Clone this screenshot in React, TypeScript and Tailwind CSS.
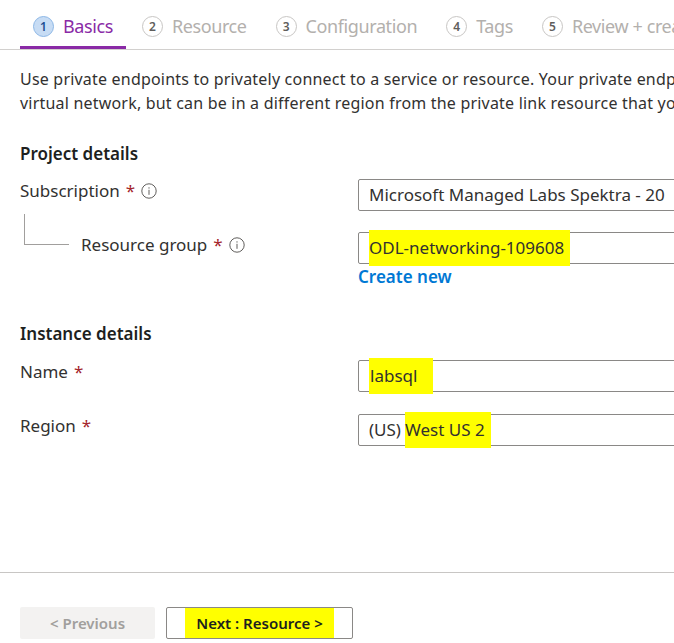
import React from 'react';

const font = { fontFamily: '"Noto Sans", "Open Sans", sans-serif' };

const InfoIcon: React.FC = () => (
  <svg width="16" height="16" viewBox="0 0 16 16" className="inline-block shrink-0 text-[#605e5c]">
    <circle cx="8" cy="8" r="7.2" fill="none" stroke="currentColor" strokeWidth="1" />
    <rect x="7.5" y="6.8" width="1" height="5" fill="currentColor" />
    <circle cx="8" cy="4.9" r="0.7" fill="currentColor" />
  </svg>
);

const Req: React.FC = () => <span className="text-[#a4262c] ml-[6px]">*</span>;

type TabProps = { n: number; label: string; active?: boolean };

const Tab: React.FC<TabProps> = ({ n, label, active }) => (
  <div
    className={`flex items-center gap-[9px] px-[13px] h-full border-b-[3px] shrink-0 ${
      active ? 'border-[#8a2aa6]' : 'border-transparent'
    }`}
  >
    <span
      className={`flex items-center justify-center w-[21px] h-[21px] rounded-full text-[12px] font-semibold border ${
        active
          ? 'bg-[#c7dcf4] border-[#8cb7e6] text-[#1d4f91]'
          : 'bg-white border-[#c8c6c4] text-[#605e5c]'
      }`}
    >
      {n}
    </span>
    <span className={`text-[18px] tracking-[-0.4px] ${active ? 'text-[#8a2aa6]' : 'text-[#b3b0ad]'}`}>
      {label}
    </span>
  </div>
);

const Box: React.FC<{ children: React.ReactNode }> = ({ children }) => (
  <div className="w-[340px] h-[32px] shrink-0 border border-[#8a8886] rounded-[2px] flex items-center pl-[10px] text-[17px] text-[#323130] whitespace-nowrap">
    {children}
  </div>
);

const Mark: React.FC<{ children: React.ReactNode; className?: string }> = ({ children, className }) => (
  <span className={`bg-[#ffff00] py-[5px] ${className ?? ''}`}>{children}</span>
);

export default function App() {
  return (
    <div className="w-[674px] h-[643px] overflow-hidden bg-white flex flex-col text-[#323130]" style={font}>
      <div className="flex h-[50px] pl-[20px] gap-[3px] border-b border-[#d2d0ce] whitespace-nowrap pt-[7px]">
        <Tab n={1} label="Basics" active />
        <Tab n={2} label="Resource" />
        <Tab n={3} label="Configuration" />
        <Tab n={4} label="Tags" />
        <Tab n={5} label="Review + create" />
      </div>

      <p className="mt-[17px] pl-[20px] text-[16px] leading-[24px] tracking-[0.2px] whitespace-nowrap">
        Use private endpoints to privately connect to a service or resource. Your private endpoint must be in the same region as your
        <br />
        virtual network, but can be in a different region from the private link resource that you are connecting to.
      </p>

      <div className="pl-[20px] flex flex-col">
        <h2 className="mt-[27px] text-[17px] font-semibold leading-[24px] text-[#201f1e]">Project details</h2>

        <div className="flex mt-[13px]">
          <div className="w-[338px] shrink-0 flex items-center gap-[6px] text-[17px] h-[24px]">
            <span>
              Subscription
              <Req />
            </span>
            <InfoIcon />
          </div>
          <Box>Microsoft Managed Labs Spektra - 20</Box>
        </div>

        <div className="flex mt-[21px]">
          <div className="w-[338px] shrink-0 flex items-start">
            <div className="ml-[4px] -mt-[18px] w-[45px] h-[31px] border-l border-b border-[#a19f9d]" />
            <div className="ml-[12px] mt-[1px] flex items-center gap-[6px] text-[17px] h-[24px]">
              <span>
                Resource group
                <Req />
              </span>
              <InfoIcon />
            </div>
          </div>
          <div className="flex flex-col shrink-0">
            <Box>
              <Mark className="pr-[6px]">ODL-networking-109608</Mark>
            </Box>
            <a className="mt-[1px] text-[17px] font-semibold text-[#0078d4] leading-[24px]">Create new</a>
          </div>
        </div>

        <h2 className="mt-[33px] text-[17px] font-semibold leading-[24px] text-[#201f1e]">Instance details</h2>

        <div className="flex mt-[14px]">
          <div className="w-[338px] shrink-0 text-[17px] leading-[24px]">
            Name
            <Req />
          </div>
          <Box>
            <Mark className="pl-[1px] pr-[16px]">labsql</Mark>
          </Box>
        </div>

        <div className="flex mt-[22px]">
          <div className="w-[338px] shrink-0 text-[17px] leading-[24px]">
            Region
            <Req />
          </div>
          <Box>
            <span className="mr-[4px]">(US)</span>
            <Mark className="pr-[6px]">West US 2</Mark>
          </Box>
        </div>
      </div>

      <div className="mt-auto border-t border-[#c8c6c4] h-[71px] flex items-end pb-[4px] pl-[20px] gap-[11px]">
        <button className="w-[135px] h-[32px] rounded-[2px] bg-[#f3f2f1] text-[#a19f9d] text-[15px] font-semibold">
          &lt; Previous
        </button>
        <button className="w-[187px] h-[32px] rounded-[2px] border border-[#8a8886] text-[#201f1e] text-[15px] font-semibold">
          <Mark className="px-[11px]">Next : Resource &gt;</Mark>
        </button>
      </div>
    </div>
  );
}
